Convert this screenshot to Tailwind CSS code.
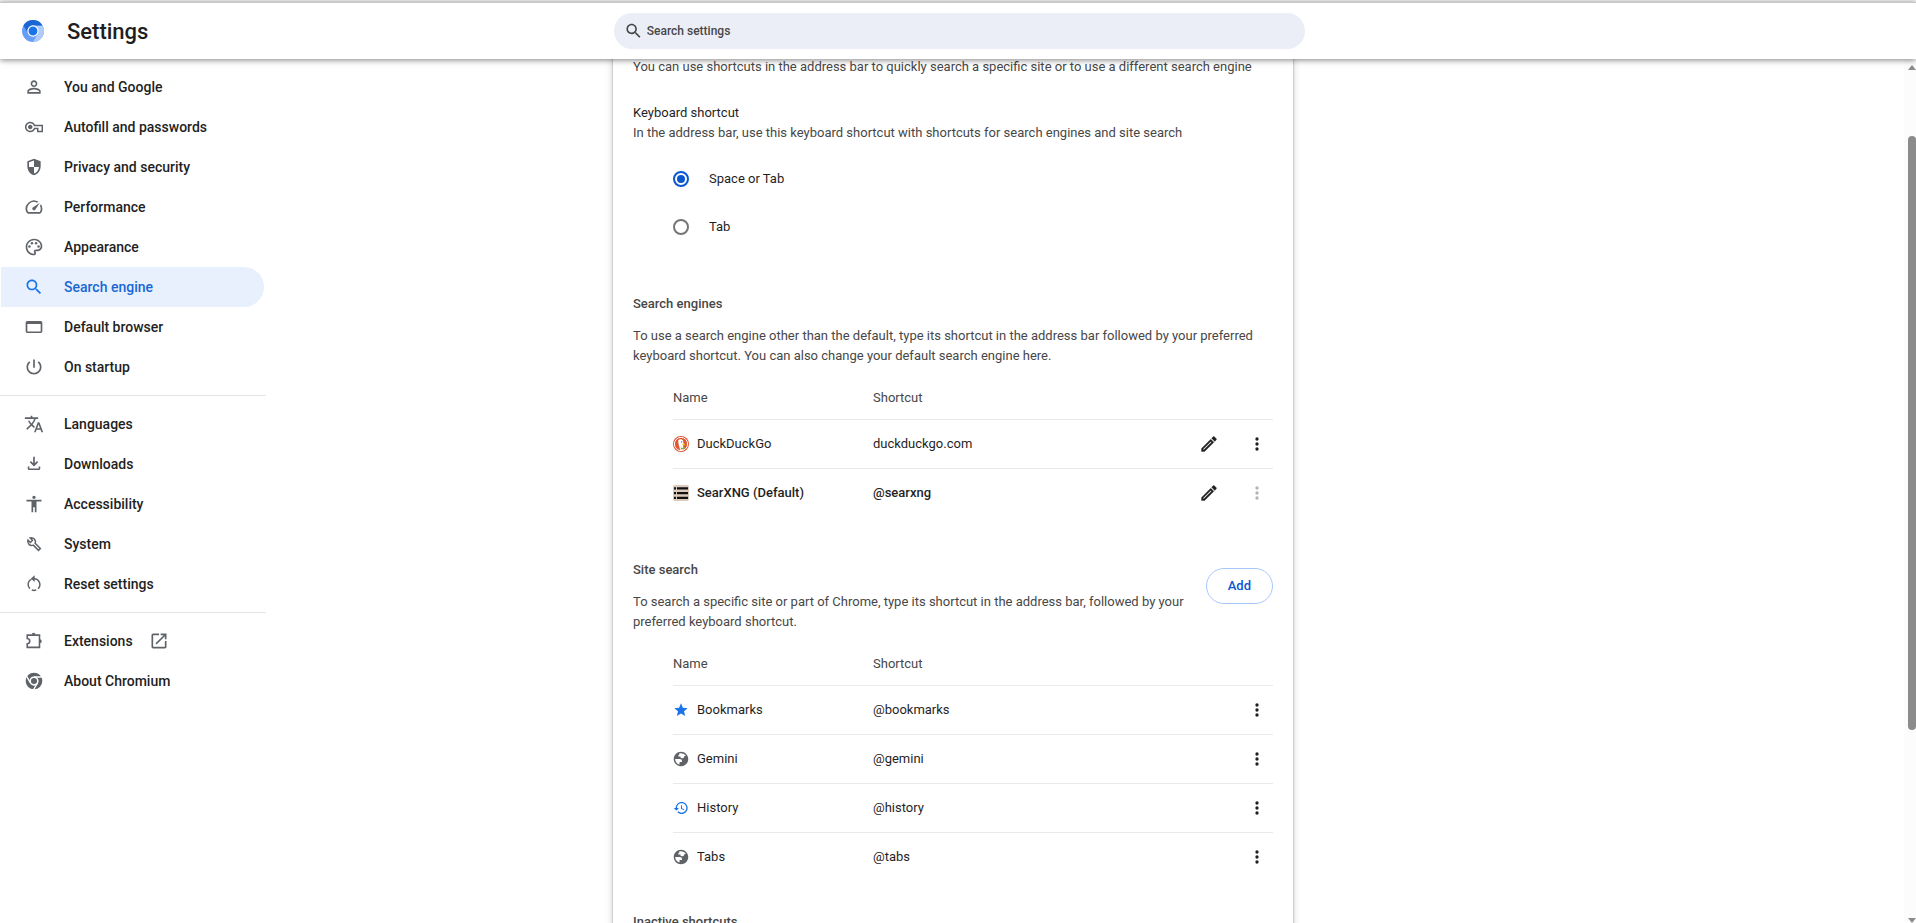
<!DOCTYPE html>
<html lang="en">
<head>
  <meta charset="UTF-8">
  <meta name="viewport" content="width=device-width, initial-scale=1.0">
  <title>Settings - Search engine</title>
  <script src="https://cdn.jsdelivr.net/npm/@tailwindcss/browser@4"></script>
</head>
<body class="flex h-screen flex-col overflow-hidden bg-white font-['Roboto',sans-serif] text-[13px] leading-5 text-[#1f1f1f]">

  <!-- Icon sprite -->
  <svg class="hidden">
    <symbol id="person" viewBox="0 0 24 24"><path d="M12 5.9a2.1 2.1 0 1 1 0 4.2 2.1 2.1 0 0 1 0-4.2m0 9c2.97 0 6.1 1.46 6.1 2.1v1.1H5.9V17c0-.64 3.13-2.1 6.1-2.1M12 4C9.79 4 8 5.79 8 8s1.79 4 4 4 4-1.79 4-4-1.79-4-4-4zm0 9c-2.67 0-8 1.34-8 4v3h16v-3c0-2.66-5.33-4-8-4z"/></symbol>
    <symbol id="key" viewBox="-1.3 -1.3 26.6 26.6"><path d="M22 19h-6v-4h-2.68c-1.14 2.42-3.6 4-6.32 4-3.86 0-7-3.14-7-7s3.14-7 7-7c2.72 0 5.17 1.58 6.32 4H24v10zm-4-2h4v-6H11.94l-.23-.67C11.01 8.34 9.11 7 7 7c-2.76 0-5 2.24-5 5s2.24 5 5 5c2.11 0 4.01-1.34 4.71-3.33l.23-.67H18v4zM7 15c-1.65 0-3-1.35-3-3s1.35-3 3-3 3 1.35 3 3-1.35 3-3 3z"/></symbol>
    <symbol id="shield" viewBox="0 0 24 24"><path d="M12 2 4 5v6.09C4 16.14 7.41 20.85 12 22c4.59-1.15 8-5.86 8-10.91V5zm0 10h6c-.4 3.7-2.9 6.9-6 7.9V12H6V6.4l6-2.26z"/></symbol>
    <symbol id="speed" viewBox="0 0 24 24"><path d="M20.38 8.57l-1.23 1.85a8 8 0 0 1-.22 7.58H5.07A8 8 0 0 1 15.58 6.85l1.85-1.23A10 10 0 0 0 3.35 19a2 2 0 0 0 1.72 1h13.85a2 2 0 0 0 1.74-1 10 10 0 0 0-.27-10.44zm-9.79 6.84a2 2 0 0 0 2.83 0l5.66-8.49-8.49 5.66a2 2 0 0 0 0 2.83z"/></symbol>
    <symbol id="palette" viewBox="0 0 24 24"><path d="M12 22C6.49 22 2 17.51 2 12S6.49 2 12 2s10 4.04 10 9c0 3.31-2.69 6-6 6h-1.77c-.28 0-.5.22-.5.5 0 .12.05.23.13.33.41.47.64 1.06.64 1.67A2.5 2.5 0 0 1 12 22zm0-18c-4.41 0-8 3.59-8 8s3.59 8 8 8c.28 0 .5-.22.5-.5a.54.54 0 0 0-.14-.35c-.41-.46-.63-1.05-.63-1.65a2.5 2.5 0 0 1 2.5-2.5H16c2.21 0 4-1.79 4-4 0-3.86-3.59-7-8-7z"/><circle cx="6.5" cy="11.5" r="1.5"/><circle cx="9.5" cy="7.5" r="1.5"/><circle cx="14.5" cy="7.5" r="1.5"/><circle cx="17.5" cy="11.5" r="1.5"/></symbol>
    <symbol id="search" viewBox="0 0 24 24"><path d="M15.5 14h-.79l-.28-.27C15.41 12.59 16 11.11 16 9.5 16 5.91 13.09 3 9.5 3S3 5.91 3 9.5 5.91 16 9.5 16c1.61 0 3.09-.59 4.23-1.57l.27.28v.79l5 4.99L20.49 19l-4.99-5zm-6 0C7.01 14 5 11.99 5 9.5S7.01 5 9.5 5 14 7.01 14 9.5 11.99 14 9.5 14z"/></symbol>
    <symbol id="window" viewBox="0 0 24 24"><path d="M20 4.800H4c-1.100 0-2 .9-2 2v10.400c0 1.100.9 2 2 2h16c1.100 0 2-.9 2-2V6.800c0-1.100-.9-2-2-2zm0 12.700H4V8.400h16z"/></symbol>
    <symbol id="power" viewBox="0 0 24 24"><path d="M13 3h-2v10h2V3zm4.83 2.17l-1.42 1.42C17.99 7.86 19 9.81 19 12c0 3.870-3.130 7-7 7s-7-3.130-7-7c0-2.190 1.010-4.140 2.580-5.420L6.170 5.170C4.230 6.820 3 9.260 3 12c0 4.970 4.030 9 9 9s9-4.030 9-9c0-2.740-1.230-5.180-3.170-6.830z"/></symbol>
    <symbol id="translate" viewBox="0 0 24 24"><path d="M12.87 15.07l-2.54-2.51.03-.03c1.74-1.94 2.98-4.17 3.71-6.53H17V4h-7V2H8v2H1v1.99h11.17C11.5 7.92 10.44 9.75 9 11.35 8.07 10.32 7.3 9.19 6.69 8h-2c.73 1.63 1.73 3.17 2.98 4.56l-5.09 5.02L4 19l5-5 3.11 3.11.76-2.04zM18.5 10h-2L12 22h2l1.12-3h4.75L21 22h2l-4.5-12zm-2.62 7l1.62-4.33L19.12 17h-3.24z"/></symbol>
    <symbol id="download" viewBox="0 0 24 24"><path d="M11 3.200h2v7.900l2.600-2.600L17 9.900l-5 5-5-5 1.400-1.400 2.600 2.600zM4.500 15h1.900v2.300h11.200V15h1.900v2.500c0 1-.8 1.800-1.800 1.800H6.300c-1 0-1.800-.8-1.800-1.800z"/></symbol>
    <symbol id="accessibility" viewBox="0 0 24 24"><path d="M12 2c1.100 0 2 .9 2 2s-.9 2-2 2-2-.9-2-2 .9-2 2-2zm9 7h-6v13h-2v-6h-2v6H9V9H3V7h18v2z"/></symbol>
    <symbol id="wrench" viewBox="0 0 24 24"><path d="M4.700 7.300l2.900 2.900 2.600-2.600-2.900-2.900A4.900 4.900 0 0 1 13.400 11.200l6.200 6.200-2.200 2.200-6.200-6.200A4.900 4.900 0 0 1 4.700 7.300z" fill="none" stroke="currentColor" stroke-width="1.800"/></symbol>
    <symbol id="reset" viewBox="0 0 24 24"><path d="M9 6.200A7 7 0 0 0 7 17.600M9.300 19.100a7 7 0 0 0 5.400 0M17 17.600A7 7 0 0 0 12 5.700" fill="none" stroke="currentColor" stroke-width="1.800"/><path d="M12.800 1.500v8L8.300 5.500z"/></symbol>
    <symbol id="extension" viewBox="0 0 24 24"><path d="M3.900 4.900h14.700v14.700H3.900v-4.300c1.800-.3 3-1.500 3-3.100s-1.200-2.800-3-3.100z" fill="none" stroke="currentColor" stroke-width="1.900"/><path d="M9.200 4.500a2.300 2.300 0 0 1 4.600 0zM19 9.900a2.300 2.300 0 0 1 0 4.600z"/></symbol>
    <symbol id="open-in-new" viewBox="0 0 24 24"><path d="M19 19H5V5h7V3H5c-1.110 0-2 .9-2 2v14c0 1.100.890 2 2 2h14c1.100 0 2-.9 2-2v-7h-2v7zM14 3v2h3.590l-9.830 9.830 1.410 1.410L19 6.410V10h2V3h-7z"/></symbol>
    <symbol id="chrome" viewBox="0 0 24 24"><circle cx="12" cy="12" r="10"/><path d="M12 7.200h9.500M7.800 14.400 3 6.200M16.200 14.400 11.400 22.500" stroke="#fff" stroke-width="1.700"/><circle cx="12" cy="12" r="4.600" fill="currentColor" stroke="#fff" stroke-width="1.900"/></symbol>
    <symbol id="edit" viewBox="0 0 24 24"><path d="M14.100 9l.9.900L5.900 19H5v-.900L14.100 9m3.600-6c-.25 0-.51.100-.700.290l-1.830 1.830 3.750 3.750 1.830-1.830c.39-.39.39-1.020 0-1.410l-2.340-2.340c-.2-.2-.45-.290-.710-.290zm-3.600 3.190L3 17.250V21h3.750L17.810 9.940l-3.750-3.750z" stroke="currentColor" stroke-width=".4"/></symbol>
    <symbol id="more" viewBox="0 0 24 24"><path d="M12 8a2 2 0 1 0 0-4 2 2 0 0 0 0 4zm0 2a2 2 0 1 0 0 4 2 2 0 0 0 0-4zm0 6a2 2 0 1 0 0 4 2 2 0 0 0 0-4z"/></symbol>
    <symbol id="star" viewBox="0 0 24 24"><path d="M12 17.270 18.180 21l-1.640-7.030L22 9.240l-7.190-.61L12 2 9.190 8.630 2 9.240l5.460 4.730L5.820 21z"/></symbol>
    <symbol id="globe" viewBox="1 1 22 22"><path d="M12 2C6.48 2 2 6.48 2 12s4.480 10 10 10 10-4.480 10-10S17.520 2 12 2zM4 12h6.400c1.900 0 2.900 1 2.900 2.900v1.200H10v3.600C6.500 18.800 4 15.700 4 12zm5.500-7.600c3.500-1.100 7.400.3 9.300 3.300l-2.100.1c-.4 2.400-1.500 3.300-3.300 3.200-1.700 0-2.200-.9-2.200-2.300H8.400V6.500h1.100z"/></symbol>
    <symbol id="history" viewBox="0 0 24 24"><path d="M13 3c-4.970 0-9 4.030-9 9H1l3.890 3.890.07.14L9 12H6c0-3.870 3.130-7 7-7s7 3.130 7 7-3.130 7-7 7c-1.930 0-3.680-.79-4.940-2.060l-1.420 1.420C8.270 19.990 10.510 21 13 21c4.970 0 9-4.030 9-9s-4.030-9-9-9zm-1 5v5l4.280 2.540.72-1.210-3.500-2.080V8H12z"/></symbol>
  </svg>

  <!-- Header -->
  <div class="h-[2px] shrink-0 bg-[#f6f5f4]"></div>
  <header class="relative z-10 flex h-[57px] shrink-0 items-center border-t border-[#c8c6c4] bg-white pr-5 shadow-[0_1px_6px_rgba(0,0,0,0.5)]">
    <div class="flex flex-1 items-center gap-[23px] pl-[22px]">
      <svg class="size-[22px]" viewBox="0 0 24 24" aria-hidden="true">
        <circle cx="12" cy="12" r="12" fill="#669df6"/>
        <path d="M12 6h10.400A12 12 0 0 1 12 24l5.200-9z" fill="#aecbfa"/>
        <path d="M1.600 6a12 12 0 0 1 20.800 0H12a6 6 0 0 0-5.200 9z" fill="#1967d2"/>
        <circle cx="12" cy="12" r="5.500" fill="#1a73e8" stroke="#fff" stroke-width="1.300"/>
      </svg>
      <h1 class="pt-px text-[22px] leading-8 font-medium">Settings</h1>
    </div>
    <label class="flex h-9 w-[691px] items-center gap-1 rounded-full bg-[#eceef7] px-[10px] text-[#474747]">
      <svg class="size-5 fill-current" aria-hidden="true"><use href="#search"/></svg>
      <input type="search" aria-label="Search settings" placeholder="Search settings" class="w-full bg-transparent text-xs font-medium outline-none placeholder:text-[#474747]">
    </label>
    <div class="flex-1"></div>
  </header>

  <div class="flex min-h-0 flex-1">
    <!-- Side menu -->
    <nav class="w-[266px] shrink-0 pt-2 text-sm font-medium text-[#1f1f1f]">
      <a href="#" class="flex h-10 items-center gap-5 pl-6"><svg class="size-5 fill-current text-[#5f6368]"><use href="#person"/></svg>You and Google</a>
      <a href="#" class="flex h-10 items-center gap-5 pl-6"><svg class="size-5 fill-current text-[#5f6368]"><use href="#key"/></svg>Autofill and passwords</a>
      <a href="#" class="flex h-10 items-center gap-5 pl-6"><svg class="size-5 fill-current text-[#5f6368]"><use href="#shield"/></svg>Privacy and security</a>
      <a href="#" class="flex h-10 items-center gap-5 pl-6"><svg class="size-5 fill-current text-[#5f6368]"><use href="#speed"/></svg>Performance</a>
      <a href="#" class="flex h-10 items-center gap-5 pl-6"><svg class="size-5 fill-current text-[#5f6368]"><use href="#palette"/></svg>Appearance</a>
      <a href="#" aria-current="page" class="mr-[2px] ml-px flex h-10 items-center gap-5 rounded-r-full bg-[#e8f0fe] pl-[23px] text-[#1967d2]"><svg class="size-5 fill-current text-[#1a73e8]"><use href="#search"/></svg>Search engine</a>
      <a href="#" class="flex h-10 items-center gap-5 pl-6"><svg class="size-5 fill-current text-[#5f6368]"><use href="#window"/></svg>Default browser</a>
      <a href="#" class="flex h-10 items-center gap-5 pl-6"><svg class="size-5 fill-current text-[#5f6368]"><use href="#power"/></svg>On startup</a>
      <hr class="my-2 border-[#e4e4e4]">
      <a href="#" class="flex h-10 items-center gap-5 pl-6"><svg class="size-5 fill-current text-[#5f6368]"><use href="#translate"/></svg>Languages</a>
      <a href="#" class="flex h-10 items-center gap-5 pl-6"><svg class="size-5 fill-current text-[#5f6368]"><use href="#download"/></svg>Downloads</a>
      <a href="#" class="flex h-10 items-center gap-5 pl-6"><svg class="size-5 fill-current text-[#5f6368]"><use href="#accessibility"/></svg>Accessibility</a>
      <a href="#" class="flex h-10 items-center gap-5 pl-6"><svg class="size-5 fill-current text-[#5f6368]"><use href="#wrench"/></svg>System</a>
      <a href="#" class="flex h-10 items-center gap-5 pl-6"><svg class="size-5 fill-current text-[#5f6368]"><use href="#reset"/></svg>Reset settings</a>
      <hr class="my-2 border-[#e4e4e4]">
      <a href="#" class="flex h-10 items-center gap-5 pl-6"><svg class="size-5 fill-current text-[#5f6368]"><use href="#extension"/></svg>Extensions<svg class="-ml-1 size-5 fill-current text-[#5f6368]"><use href="#open-in-new"/></svg></a>
      <a href="#" class="flex h-10 items-center gap-5 pl-6"><svg class="size-5 fill-current text-[#5f6368]"><use href="#chrome"/></svg>About Chromium</a>
    </nav>

    <!-- Search engine page -->
    <main class="flex flex-1 justify-center overflow-hidden">
      <div class="-mt-[2px] h-max w-[680px] px-5 pb-10 shadow-[0_0_2px_rgba(60,64,67,0.5),0_2px_6px_2px_rgba(60,64,67,0.15)]">
        <p class="text-[#474747]">You can use shortcuts in the address bar to quickly search a specific site or to use a different search engine</p>

        <fieldset class="mt-[26px]">
          <legend>Keyboard shortcut</legend>
          <p class="text-[#474747]">In the address bar, use this keyboard shortcut with shortcuts for search engines and site search</p>
          <div class="mt-3 pl-10">
            <label class="flex h-12 items-center gap-5">
              <input type="radio" name="shortcut" checked class="size-4 appearance-none rounded-full border-2 border-[#757575] checked:border-[#0b57d0] checked:bg-[#0b57d0] checked:bg-clip-content checked:p-[2px]">
              Space or Tab
            </label>
            <label class="flex h-12 items-center gap-5">
              <input type="radio" name="shortcut" class="size-4 appearance-none rounded-full border-2 border-[#757575] checked:border-[#0b57d0] checked:bg-[#0b57d0] checked:bg-clip-content checked:p-[2px]">
              Tab
            </label>
          </div>
        </fieldset>

        <!-- Search engines -->
        <section class="mt-[43px]">
          <h2 class="font-medium text-[#474747]">Search engines</h2>
          <p class="mt-3 text-[#474747]">To use a search engine other than the default, type its shortcut in the address bar followed by your preferred keyboard shortcut. You can also change your default search engine here.</p>
          <div class="mt-[10px] pl-10">
            <table class="w-full table-fixed text-left">
              <thead>
                <tr class="h-[43px] text-[#474747]">
                  <th class="w-[200px] pt-[2px] font-normal">Name</th>
                  <th class="pt-[2px] font-normal">Shortcut</th>
                  <th class="w-20" aria-label="Actions"></th>
                </tr>
              </thead>
              <tbody>
                <tr class="h-[49px] border-t border-[#e9e9e9]">
                  <td>
                    <div class="flex items-center gap-2">
                      <svg class="size-4" viewBox="0 0 16 16" aria-hidden="true">
                        <circle cx="8" cy="8" r="8" fill="#de5833"/>
                        <circle cx="8" cy="8" r="6.600" fill="#de5833" stroke="#fff" stroke-width="1"/>
                        <path d="M5.200 4.200C6.500 2.800 9 3 9.900 4.600c.6 1 .5 2 .3 3l1.600.5-1.700.9c-.2 1 .4 2.500.8 4.500-1.300.5-2.700.6-3.700.3C6.500 11 5 7.500 5.200 4.200z" fill="#fff"/>
                        <path d="M9.300 8h3l-.6 1-2.200.2z" fill="#fdd20a"/>
                        <path d="M7.800 11.300l1.600.6 2-.8.2 2.200-2-.4-1.700.6z" fill="#65bc46"/>
                        <circle cx="8.600" cy="5.900" r=".6" fill="#2d4f8e"/>
                      </svg>
                      DuckDuckGo
                    </div>
                  </td>
                  <td>duckduckgo.com</td>
                  <td>
                    <div class="flex justify-end gap-4">
                      <button aria-label="Edit" class="flex size-8 items-center justify-center"><svg class="size-5 fill-current"><use href="#edit"/></svg></button>
                      <button aria-label="More actions" class="flex size-8 items-center justify-center"><svg class="size-5 fill-current"><use href="#more"/></svg></button>
                    </div>
                  </td>
                </tr>
                <tr class="h-[49px] border-t border-[#e9e9e9] font-medium">
                  <td>
                    <div class="flex items-center gap-2">
                      <svg class="size-4" viewBox="0 0 16 16" aria-hidden="true">
                        <rect width="16" height="16" rx="2" fill="#dccbbd"/>
                        <path d="M1 2.200h2v2.300H1zm3 0h11v2.300H4zM1 7h2v2.300H1zm3 0h11v2.300H4zM1 11.800h2v2.300H1zm3 0h11v2.300H4z" fill="#111"/>
                      </svg>
                      SearXNG (Default)
                    </div>
                  </td>
                  <td>@searxng</td>
                  <td>
                    <div class="flex justify-end gap-4">
                      <button aria-label="Edit" class="flex size-8 items-center justify-center"><svg class="size-5 fill-current"><use href="#edit"/></svg></button>
                      <button aria-label="More actions" disabled class="flex size-8 items-center justify-center text-[#b4b4b4]"><svg class="size-5 fill-current"><use href="#more"/></svg></button>
                    </div>
                  </td>
                </tr>
              </tbody>
            </table>
          </div>
        </section>

        <!-- Site search -->
        <section class="mt-[43px]">
          <div class="flex items-start justify-between gap-5">
            <div>
              <h2 class="font-medium text-[#474747]">Site search</h2>
              <p class="mt-3 text-[#474747]">To search a specific site or part of Chrome, type its shortcut in the address bar, followed by your preferred keyboard shortcut.</p>
            </div>
            <button class="mt-2 h-9 shrink-0 rounded-full border border-[#a8c7fa] px-[21px] font-medium text-[#0b57d0]">Add</button>
          </div>
          <div class="mt-[10px] pl-10">
            <table class="w-full table-fixed text-left">
              <thead>
                <tr class="h-[43px] text-[#474747]">
                  <th class="w-[200px] pt-[2px] font-normal">Name</th>
                  <th class="pt-[2px] font-normal">Shortcut</th>
                  <th class="w-20" aria-label="Actions"></th>
                </tr>
              </thead>
              <tbody>
                <tr class="h-[49px] border-t border-[#e9e9e9]">
                  <td><div class="flex items-center gap-2"><svg class="size-4 fill-[#1a73e8]"><use href="#star"/></svg>Bookmarks</div></td>
                  <td>@bookmarks</td>
                  <td><button aria-label="More actions" class="ml-auto flex size-8 items-center justify-center"><svg class="size-5 fill-current"><use href="#more"/></svg></button></td>
                </tr>
                <tr class="h-[49px] border-t border-[#e9e9e9]">
                  <td><div class="flex items-center gap-2"><svg class="size-4 fill-[#5f6368]"><use href="#globe"/></svg>Gemini</div></td>
                  <td>@gemini</td>
                  <td><button aria-label="More actions" class="ml-auto flex size-8 items-center justify-center"><svg class="size-5 fill-current"><use href="#more"/></svg></button></td>
                </tr>
                <tr class="h-[49px] border-t border-[#e9e9e9]">
                  <td><div class="flex items-center gap-2"><svg class="size-4 fill-[#1a73e8]"><use href="#history"/></svg>History</div></td>
                  <td>@history</td>
                  <td><button aria-label="More actions" class="ml-auto flex size-8 items-center justify-center"><svg class="size-5 fill-current"><use href="#more"/></svg></button></td>
                </tr>
                <tr class="h-[49px] border-t border-[#e9e9e9]">
                  <td><div class="flex items-center gap-2"><svg class="size-4 fill-[#5f6368]"><use href="#globe"/></svg>Tabs</div></td>
                  <td>@tabs</td>
                  <td><button aria-label="More actions" class="ml-auto flex size-8 items-center justify-center"><svg class="size-5 fill-current"><use href="#more"/></svg></button></td>
                </tr>
              </tbody>
            </table>
          </div>
        </section>

        <section class="mt-[31px]">
          <h2 class="font-medium text-[#474747]">Inactive shortcuts</h2>
        </section>
      </div>
    </main>
    <div class="w-[264px] shrink-0"></div>

    <!-- Scrollbar -->
    <div class="flex w-3 shrink-0 flex-col items-end bg-[#fcfcfc] pt-1.5" aria-hidden="true">
      <svg class="h-[5px] w-2 fill-[#8b8b8b]" viewBox="0 0 8 5"><path d="M4 0l4 5H0z"/></svg>
      <div class="flex min-h-0 w-2 flex-1 flex-col pt-[66px]">
        <div class="h-[76%] w-2 rounded-full bg-[#8b8b8b]"></div>
      </div>
      <svg class="h-[5px] w-2 fill-[#8b8b8b]" viewBox="0 0 8 5"><path d="M0 0h8L4 5z"/></svg>
    </div>
  </div>

</body>
</html>
